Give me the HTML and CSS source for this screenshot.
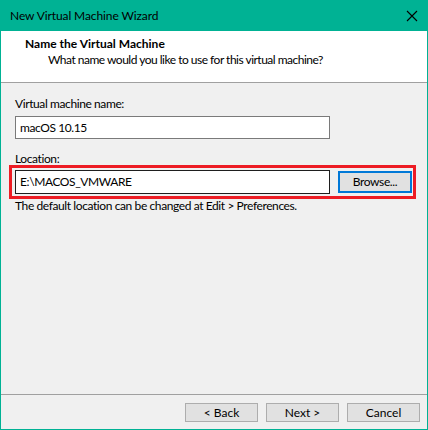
FILE: index.html
```html
<!DOCTYPE html>
<html>
<head>
<meta charset="utf-8">
<link rel="stylesheet" href="styles.css">
</head>
<body>
<div class="window">
  <div class="titlebar">
    <span class="title">New Virtual Machine Wizard</span>
    <svg class="close" width="12" height="12" viewBox="0 0 12 12"><path d="M1 1 L11 11 M11 1 L1 11" stroke="#000" stroke-width="1.1" fill="none"/></svg>
  </div>
  <div class="frame">
    <div class="header">
      <div class="heading">Name the Virtual Machine</div>
      <div class="subheading">What name would you like to use for this virtual machine?</div>
    </div>
    <div class="content">
      <div class="label">Virtual machine name:</div>
      <div class="textbox name-box">macOS 10.15</div>
      <div class="label loc-label">Location:</div>
      <div class="highlight">
        <div class="textbox loc-box">E:\MACOS_VMWARE</div>
        <div class="button browse">Browse...</div>
      </div>
      <div class="hint">The default location can be changed at Edit &gt; Preferences.</div>
    </div>
    <div class="footer">
      <div class="button">&lt; Back</div>
      <div class="button">Next &gt;</div>
      <div class="button">Cancel</div>
    </div>
  </div>
</div>
</body>
</html>
```
FILE: styles.css
```css
* { box-sizing: border-box; }
html, body { margin: 0; padding: 0; }
body {
  font-family: "Lato", "Liberation Sans", sans-serif;
  font-size: 12px;
  color: #000;
  background: #f0f0f0;
}
.window {
  width: 428px;
  height: 430px;
  display: flex;
  flex-direction: column;
}
.titlebar {
  height: 31px;
  background: #00b294;
  display: flex;
  align-items: center;
  justify-content: space-between;
  padding: 0 10px 0 10px;
}
.title { font-size: 12px; line-height: 16px; letter-spacing: -0.1px; }
.close { display: block; }
.frame {
  flex: 1;
  display: flex;
  flex-direction: column;
  border: 1px solid #00b294;
  border-top: none;
  background: #f0f0f0;
}
.header {
  height: 52px;
  background: #fff;
  border-bottom: 1px solid #a0a0a0;
  padding: 5px 0 0 24px;
}
.heading { font-weight: bold; line-height: 16px; }
.subheading { line-height: 16px; padding-left: 23px; letter-spacing: -0.5px; }
.content {
  flex: 1;
  padding: 13px 0 0 14px;
  letter-spacing: -0.4px;
}
.label { line-height: 16px; }
.textbox {
  background: #fff;
  border: 1px solid #7a7a7a;
  height: 23px;
  width: 315px;
  line-height: 21px;
  padding-left: 4px;
}
.name-box { margin-top: 4px; }
.loc-label { margin-top: 12px; }
.highlight {
  margin-top: -2px;
  margin-left: -6px;
  width: 407px;
  height: 34px;
  border: 3px solid #ed1c24;
  display: flex;
  align-items: center;
  padding-left: 3px;
}
.loc-box {
  border-color: #1e1e1e;
  height: 24px;
  line-height: 22px;
}
.button {
  width: 73px;
  height: 19px;
  border: 1px solid #adadad;
  background: #e1e1e1;
  text-align: center;
  line-height: 17px;
}
.browse {
  margin-left: 8px;
  width: 74px;
  height: 22px;
  border: 2px solid #0078d7;
  line-height: 18px;
}
.hint { line-height: 16px; margin-top: -1px; }
.footer {
  height: 35px;
  border-top: 1px solid #a0a0a0;
  display: flex;
  justify-content: flex-end;
  gap: 8px;
  padding: 8px 7px 0 0;
}
```
